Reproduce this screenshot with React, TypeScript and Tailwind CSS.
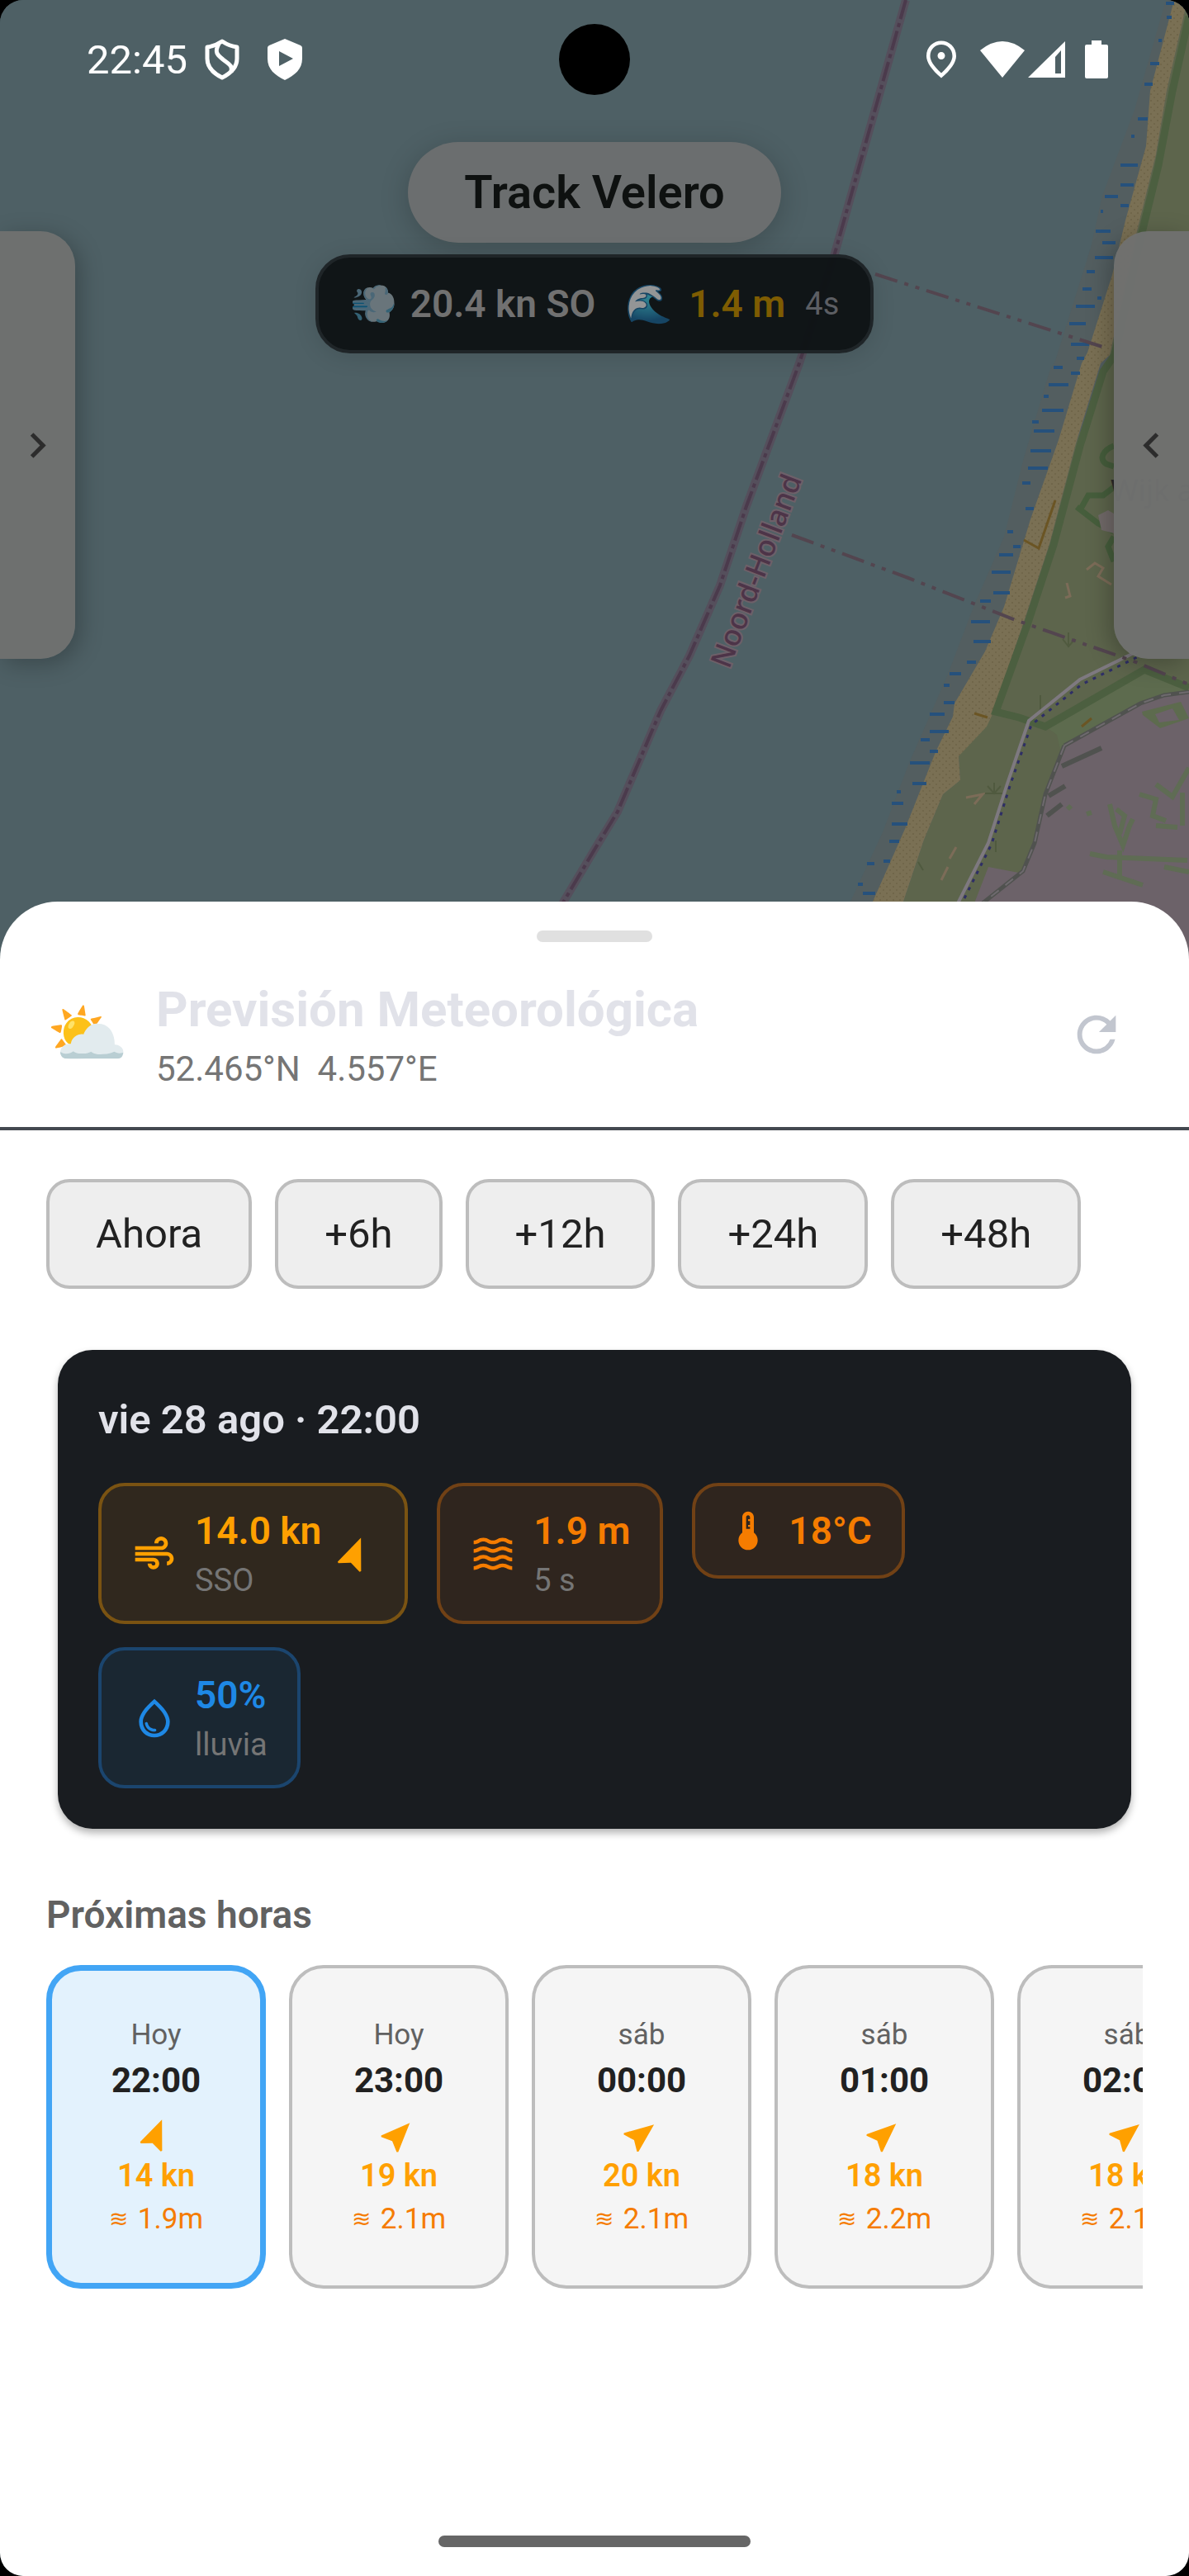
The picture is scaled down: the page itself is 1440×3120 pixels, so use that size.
import { useState } from "react";
import {
  MdAir,
  MdChevronLeft,
  MdChevronRight,
  MdNavigation,
  MdOutlinePlace,
  MdOutlineWaterDrop,
  MdRefresh,
  MdThermostat,
  MdWaves,
} from "react-icons/md";

// Tidal flat marks along the coast: x, y, length
const TIDE_MARKS = [
  [1412, 4, 10], [1413, 21, 6], [1403, 49, 4], [1393, 77, 11], [1386, 102, 10], [1378, 144, 12],
  [1370, 165, 4], [1357, 200, 21], [1357, 224, 16], [1338, 238, 16], [1357, 249, 10], [1333, 256, 3],
  [1327, 280, 18], [1335, 294, 16], [1326, 312, 22], [1316, 329, 10], [1311, 350, 11], [1329, 361, 5],
  [1303, 371, 23], [1295, 392, 20], [1297, 417, 22], [1304, 434, 9], [1276, 445, 11], [1297, 452, 11],
  [1270, 466, 24], [1264, 480, 6], [1262, 497, 26], [1250, 511, 8], [1252, 522, 25], [1248, 546, 25],
  [1245, 567, 24], [1238, 585, 10], [1242, 616, 10], [1220, 644, 7], [1227, 662, 9], [1210, 672, 17],
  [1201, 693, 23], [1203, 718, 20], [1187, 728, 13], [1176, 753, 23], [1179, 777, 21], [1171, 802, 11],
  [1150, 816, 14], [1143, 830, 7], [1143, 851, 13], [1126, 865, 18], [1126, 886, 23], [1115, 896, 11],
  [1126, 910, 10], [1102, 924, 24], [1105, 949, 17], [1086, 959, 5], [1080, 973, 14], [1080, 998, 19],
  [1077, 1019, 12], [1070, 1043, 8], [1050, 1046, 9], [1039, 1071, 6], [1045, 1082, 15],
];

const PROVINCE_BORDER =
  "M1097 0L1011 307L968 440L904 613L872 709L835 794L800 861L748 983L720 1029L660 1130";
const MUNICIPAL_BORDERS = "M1060 332L1335 420M959 648L1100 700L1230 751L1376 802L1440 829";
const SAND =
  "M1422 0L1393 110L1388 177L1363 267L1347 333L1317 427L1310 440L1282 533L1248 629L1216 735L1193 789L1156 852L1154 868L1133 911L1096 1004L1057 1092L1040 1170L1070 1170L1094 1092L1119 1017L1142 962L1163 945L1161 916L1195 880L1202 865L1239 756L1271 659L1303 537L1333 440L1344 430L1377 280L1400 187L1413 110L1438 0Z";
const FOREST_EDGE =
  "M1440 20L1420 110L1403 200L1381 290L1350 430L1336 450L1308 540L1276 660L1244 757L1206 862L1234 869L1266 880L1386 811L1440 833";
const RAILWAY = "M1289 903L1381 852L1410 842L1440 838M1289 903L1266 962L1253 1021L1239 1055L1190 1094";

const MapBackground = () => (
  <svg
    className="absolute inset-x-0 top-0 h-[1170px] w-full"
    viewBox="0 0 1440 1170"
    preserveAspectRatio="xMidYMin slice"
    aria-hidden="true"
  >
    <defs>
      <pattern id="sand-dots" width="8" height="8" patternUnits="userSpaceOnUse">
        <rect width="8" height="8" fill="#7a7054" />
        <circle cx="2" cy="2" r="1" fill="#6c6246" />
        <circle cx="6" cy="6" r="1" fill="#6e6448" />
      </pattern>
    </defs>
    <rect width="1440" height="1170" fill="#4e6065" />

    {/* Land */}
    <path
      d="M1412 0L1374 133L1335 237L1321 300L1278 437L1271 450L1239 558L1216 650L1179 735L1147 819L1101 924L1069 1008L1030 1092L1010 1170H1440V0Z"
      fill="#535e60"
    />
    <path
      d="M1438 0L1413 110L1400 187L1377 280L1344 430L1303 537L1271 659L1239 756L1202 865L1161 916L1163 945L1142 962L1119 1017L1094 1092L1070 1170H1440V0Z"
      fill="#5d654c"
    />
    <path d="M1266 880L1386 811L1440 833V1170H1200L1253 1021L1266 962L1284 908L1280 890Z" fill="#5d6b4e" />
    <path
      d="M1197 1050L1239 1058L1253 1021L1266 962L1289 903L1381 852L1410 842L1440 838V1170H1120L1180 1094Z"
      fill="#6c6269"
    />
    <path d="M1383 862L1430 850L1440 870L1405 882L1384 866Z" fill="#5d6b4e" />
    <path d="M1399 865L1420 858L1428 872L1404 875Z" fill="#6c6269" />
    <path
      d="M1293 976L1297 980M1316 986L1322 984M1344 974L1350 1000L1360 1024L1368 1000L1372 992M1352 980L1362 988L1356 1010M1380 962L1400 968L1396 988L1412 994M1400 950L1420 965L1440 930M1432 960V1000M1320 1034L1340 1038L1438 1042M1336 1056L1360 1064L1384 1072M1356 1030V1062M1400 1000L1426 1002M1410 1050L1440 1056"
      stroke="#5f6c54"
      strokeWidth="6"
      fill="none"
    />
    <path d={SAND} fill="url(#sand-dots)" />
    <path d={FOREST_EDGE} stroke="#4c5f40" strokeWidth="9" fill="none" />
    <path
      d="M1349 540C1336 545 1330 556 1340 562L1349 565M1309 616L1318 600H1336L1349 590M1304 614L1330 634L1349 644M1349 650L1342 662L1349 680"
      stroke="#465e3c"
      strokeWidth="7"
      fill="none"
    />
    <path d="M1330 624L1342 618L1349 622V646L1334 642Z" fill="#716a69" />
    <path
      d="M1316 690L1326 682L1336 688L1330 698L1346 708M1292 706L1296 722L1290 724M1170 966L1190 962L1180 974M1158 1026L1150 1040M1148 1050L1140 1066"
      stroke="#7c6c58"
      strokeWidth="3"
      fill="none"
    />
    <path d="M1278 606L1258 664L1240 654M1180 864L1196 869M1310 880L1322 870" stroke="#6b5524" strokeWidth="3" fill="none" />
    <path
      d="M1204 948V962M1196 952L1204 961L1212 952M1193 961H1216M1294 766V784M1287 774L1294 783L1302 774M1260 842V862M1206 1018V1032M1112 1044L1118 1054"
      stroke="#505a3f"
      strokeWidth="2"
      fill="none"
    />

    {/* Roads and railway */}
    <path d={RAILWAY} stroke="#50524f" strokeWidth="5" fill="none" />
    <path d={RAILWAY} stroke="#6e6a6e" strokeWidth="2" strokeDasharray="12 10" fill="none" />
    <path d="M1270 964L1290 952M1268 988L1286 974M1286 928L1334 906" stroke="#50524f" strokeWidth="6" fill="none" />
    <path d="M1140 1140L1161 1092L1197 1021L1220 949L1246 873L1308 823L1377 789" stroke="#7e7980" strokeWidth="4" fill="none" />
    <path
      d="M1168 1088L1201 1022L1224 949L1249 878L1310 829L1377 796"
      stroke="#2e2e66"
      strokeWidth="3"
      strokeDasharray="4 7"
      fill="none"
    />

    {/* Tide marks */}
    <path d={TIDE_MARKS.map(([x, y, len]) => `M${x} ${y}h${len}`).join("")} stroke="#26517c" strokeWidth="4" />

    {/* Boundaries */}
    <path d={PROVINCE_BORDER} stroke="#554f5c" strokeWidth="10" fill="none" />
    <path d={PROVINCE_BORDER} stroke="#4b3a4c" strokeWidth="4" strokeDasharray="24 5 5 5" fill="none" />
    <path d={MUNICIPAL_BORDERS} stroke="#53454f" strokeWidth="4" strokeDasharray="28 9 5 9 5 9" fill="none" />
    <text
      transform="translate(883 811) rotate(-69)"
      fontFamily="Noto Sans, sans-serif"
      fontSize="35"
      fontWeight="500"
      fill="#4d3448"
      stroke="#6d6069"
      strokeWidth="4"
      paintOrder="stroke"
    >
      Noord-Holland
    </text>
    <text x="1345" y="607" fontFamily="Noto Sans, sans-serif" fontSize="36" fill="#2a2a2a">
      Wijk aan Zee
    </text>
  </svg>
);

const StatusBar = () => (
  <header className="relative flex h-36 items-center justify-between pr-[98px] pl-[105px] text-white">
    <div className="flex items-center">
      <span className="text-[49px] leading-none">22:45</span>
      <svg className="ml-5 h-[50px] w-[44px]" viewBox="0 0 44 50" fill="none" aria-hidden="true">
        <path
          d="M22 3Q31 9 40 10V24C40 35 32 42 22 47C12 42 4 35 4 24V10Q13 9 22 3Z"
          stroke="#fff"
          strokeWidth="5"
          strokeLinejoin="round"
        />
        <path d="M18 6C12 17 17 20 23 25C31 31 35 33 33 40" stroke="#fff" strokeWidth="5" />
      </svg>
      <svg className="ml-8 h-[50px] w-[44px]" viewBox="0 0 44 50" aria-hidden="true">
        <path
          d="M22 0L41 8Q43 9 43 11V24C43 37 34 44 22 50C10 44 1 37 1 24V11Q1 9 3 8ZM15 15V33L32 24Z"
          fill="#fff"
          fillRule="evenodd"
        />
      </svg>
    </div>
    <div className="absolute top-[29px] left-1/2 size-[86px] -translate-x-1/2 rounded-full bg-black" />
    <div className="flex items-center">
      <MdOutlinePlace className="mr-5 size-[54px]" />
      <svg className="h-[46px] w-[54px]" viewBox="0 0 54 46" fill="#fff" aria-hidden="true">
        <path d="M0 12Q27 -10 54 12L27 45Z" />
      </svg>
      <svg className="ml-1 h-[46px] w-[45px]" viewBox="0 0 45 46" fill="#fff" aria-hidden="true">
        <path d="M45 1V45H0ZM40 12L33 20V40H40Z" fillRule="evenodd" />
      </svg>
      <svg className="ml-6 h-[46px] w-[28px]" viewBox="0 0 28 46" fill="#fff" aria-hidden="true">
        <path d="M8 0H20V5H26Q28 5 28 7V44Q28 46 26 46H2Q0 46 0 44V7Q0 5 2 5H8Z" />
      </svg>
    </div>
  </header>
);

const LiveConditions = () => (
  <div className="flex h-[120px] items-center rounded-[42px] border-4 border-[#1f2528] bg-[#0e1315]/97 px-[38px] text-[46px] leading-none font-semibold text-[#717171] shadow-[0_4px_28px_rgba(0,0,0,0.12)]">
    <span className="opacity-45">💨</span>
    <span className="ml-4">20.4 kn SO</span>
    <span className="ml-9 opacity-55">🌊</span>
    <span className="ml-5 text-[#7e5c02]">1.4 m</span>
    <span className="ml-6 text-[38px] font-normal text-[#5c5e63]">4s</span>
  </div>
);

const METRICS = [
  {
    icon: MdAir,
    value: "14.0 kn",
    detail: "SSO",
    heading: 22,
    box: "border-[#7a5312] bg-[#30281e] text-[#ffa000]",
  },
  { icon: MdWaves, value: "1.9 m", detail: "5 s", box: "border-[#714115] bg-[#2f251e] text-[#f57c00]" },
  { icon: MdThermostat, value: "18°C", box: "border-[#714115] bg-[#2f251e] text-[#f57c00]" },
  { icon: MdOutlineWaterDrop, value: "50%", detail: "lluvia", box: "border-[#1b456e] bg-[#1a2732] text-[#1e88e5]" },
];

const CurrentForecast = () => (
  <section className="mx-[14px] rounded-[42px] bg-[#191c20] px-[49px] pt-[50px] pb-[49px] shadow-[0_5px_10px_rgba(0,0,0,0.3)]">
    <h2 className="text-[49px] leading-[70px] font-semibold text-[#e1e2e9]">vie 28 ago · 22:00</h2>
    <div className="mt-[41px] flex flex-wrap items-start gap-x-[35px] gap-y-7">
      {METRICS.map(({ icon: Icon, value, detail, heading, box }) => (
        <div key={value} className={`flex items-center rounded-[32px] border-4 px-9 py-[21px] ${box}`}>
          <Icon className="size-14" />
          <div className="ml-[21px]">
            <p className="text-[46px] leading-[66px] font-semibold">{value}</p>
            {detail && <p className="text-[38px] leading-[55px] text-[#757575]">{detail}</p>}
          </div>
          {heading !== undefined && (
            <MdNavigation className="ml-4 size-[49px]" style={{ transform: `rotate(${heading}deg)` }} />
          )}
        </div>
      ))}
    </div>
  </section>
);

const HOURS = [
  { day: "Hoy", time: "22:00", heading: 22, wind: 14, wave: "1.9" },
  { day: "Hoy", time: "23:00", heading: 44, wind: 19, wave: "2.1" },
  { day: "sáb", time: "00:00", heading: 52, wind: 20, wave: "2.1" },
  { day: "sáb", time: "01:00", heading: 48, wind: 18, wave: "2.2" },
  { day: "sáb", time: "02:00", heading: 51, wind: 18, wave: "2.1" },
];

const HourlyForecast = () => {
  const [selected, setSelected] = useState("22:00");

  return (
    <section className="mt-[71px]">
      <h2 className="text-[46px] leading-[66px] font-semibold text-[#616161]">Próximas horas</h2>
      <div className="mt-7 flex gap-7 overflow-hidden">
        {HOURS.map((hour) => (
          <button
            key={hour.time}
            type="button"
            onClick={() => setSelected(hour.time)}
            className={`flex h-[392px] w-[266px] shrink-0 flex-col items-center justify-center rounded-[42px] ${
              hour.time === selected
                ? "border-[7px] border-[#42a5f5] bg-[#e3f2fd]"
                : "border-4 border-[#bdbdbd] bg-[#f5f5f5]"
            }`}
          >
            <span className="text-[35px] leading-[50px] text-[#616161]">{hour.day}</span>
            <span className="text-[42px] leading-[60px] font-bold text-[#212121]">{hour.time}</span>
            <MdNavigation
              className="mt-3 size-[46px] text-[#ffa000]"
              style={{ transform: `rotate(${hour.heading}deg)` }}
            />
            <span className="text-[38px] leading-[55px] font-semibold text-[#ffa000]">{hour.wind} kn</span>
            <span className="flex items-center gap-3 text-[35px] leading-[50px] text-[#f57c00]">
              <span className="text-[28px]">≋</span>
              {hour.wave}m
            </span>
          </button>
        ))}
      </div>
    </section>
  );
};

const OFFSETS = ["Ahora", "+6h", "+12h", "+24h", "+48h"];

const ForecastSheet = () => (
  <section className="relative flex flex-1 flex-col rounded-t-[70px] bg-white">
    <div className="mx-auto mt-[35px] h-[14px] w-[140px] rounded-full bg-[#e0e0e0]" />
    <div className="mt-[35px] flex h-[193px] items-center border-b-4 border-[#444950] pr-[77px] pb-[35px] pl-14">
      <span className="w-[98px] text-[80px] leading-none">⛅</span>
      <div className="ml-[35px] flex-1">
        <h1 className="text-[60px] leading-[84px] font-bold text-[#e1e2e9]">Previsión Meteorológica</h1>
        <p className="text-[42px] leading-[60px] whitespace-pre text-[#757575]">{"52.465°N  4.557°E"}</p>
      </div>
      <button type="button" aria-label="Actualizar" className="text-[#c2c6cf]">
        <MdRefresh className="size-[70px]" />
      </button>
    </div>

    <div className="px-14">
      <div className="mt-[59px] flex gap-7">
        {OFFSETS.map((offset) => (
          <button
            key={offset}
            type="button"
            className="h-[133px] rounded-[28px] border-4 border-[#bdbdbd] bg-[#eeeeee] px-14 text-[49px] leading-[70px] text-[#212121]"
          >
            {offset}
          </button>
        ))}
      </div>
      <div className="mt-[74px]">
        <CurrentForecast />
      </div>
      <HourlyForecast />
    </div>

    <div className="mx-auto mt-auto mb-[35px] h-[14px] w-[378px] rounded-full bg-[#666666]" />
  </section>
);

const sidePanel =
  "mt-[108px] flex h-[518px] w-[91px] items-center justify-center bg-[#70716f]/97 text-[#2c2c2c]";

export default function App() {
  return (
    <div className="flex min-h-screen flex-col bg-black font-[Roboto,sans-serif]">
      <div className="relative flex flex-1 flex-col overflow-hidden rounded-[28px] bg-[#4e6065]">
        <MapBackground />
        <StatusBar />
        <main className="relative flex h-[948px] items-start justify-between pt-7">
          <button
            type="button"
            aria-label="Abrir panel izquierdo"
            className={`${sidePanel} rounded-r-[42px] shadow-[6px_6px_28px_rgba(0,0,0,0.25)]`}
          >
            <MdChevronRight className="size-[61px]" />
          </button>
          <div className="flex flex-col items-center gap-[14px]">
            <div className="rounded-full bg-[#6b6e6f] px-[68px] py-[21px] text-[56px] leading-[80px] font-semibold text-[#0e1110] shadow-[0_7px_35px_rgba(0,0,0,0.2)]">
              Track Velero
            </div>
            <LiveConditions />
          </div>
          <button
            type="button"
            aria-label="Abrir panel derecho"
            className={`${sidePanel} rounded-l-[42px] shadow-[-6px_6px_28px_rgba(0,0,0,0.25)]`}
          >
            <MdChevronLeft className="size-[61px]" />
          </button>
        </main>
        <ForecastSheet />
      </div>
    </div>
  );
}
